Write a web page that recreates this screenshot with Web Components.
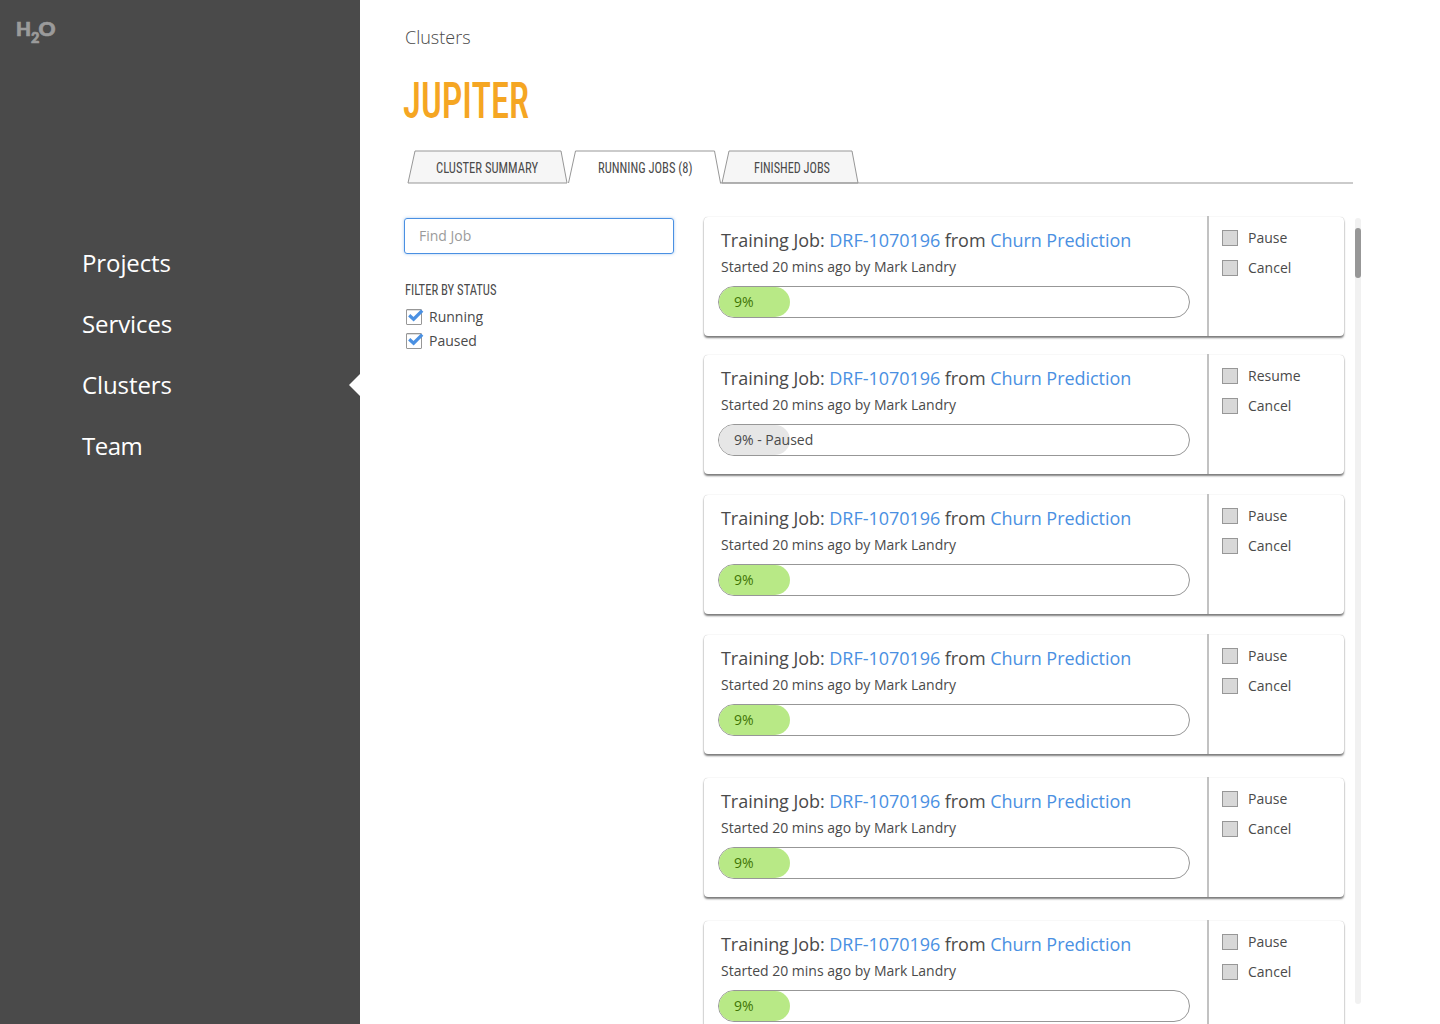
<!DOCTYPE html>
<html lang="en">
<head>
<meta charset="utf-8">
<title>H2O Clusters</title>
<style>
html,body{margin:0;height:100%;overflow:hidden;background:#fff}
body{font-family:"Open Sans",sans-serif;color:#4a4a4a}
</style>
</head>
<body>
<h2o-app></h2o-app>
<script>
function define(name, render) {
  customElements.define(name, class extends HTMLElement {
    connectedCallback() {
      if (this.shadowRoot) return;
      const t = document.createElement('template');
      t.innerHTML = render(this);
      this.attachShadow({mode: 'open'}).appendChild(t.content.cloneNode(true));
    }
  });
}

// Condensed label fitted to an exact width.
define('condensed-label', el => {
  const a = n => el.getAttribute(n), w = +a('w'), s = +a('size');
  const h = Math.round(s * 1.2);
  return `<style>:host{display:block;flex:none;width:${w}px;height:${h}px}
  svg{display:block;overflow:visible}
  text{font-family:"Liberation Sans Narrow","Roboto",sans-serif;font-stretch:75%;font-weight:${a('weight') || 400};font-size:${s}px}</style>
  <svg width="${w}" height="${h}"><text x="0" y="${s - .5}" textLength="${w}" lengthAdjust="spacingAndGlyphs" fill="currentColor">${a('text')}</text></svg>`;
});

define('h2o-logo', () => `<style>:host{display:block;width:40px;height:24px}
svg{display:block;overflow:visible}text{font-family:Lato,sans-serif;font-weight:900;fill:#9b9b9b;stroke:#9b9b9b;stroke-width:.7px}</style>
<svg width="40" height="24"><text x="0" y="15" font-size="18" textLength="15" lengthAdjust="spacingAndGlyphs">H</text>
<text x="15" y="21.5" font-size="14.5">2</text>
<text x="22.5" y="15.3" font-size="19" textLength="17" lengthAdjust="spacingAndGlyphs">O</text></svg>`);

define('nav-item', () => `<style>:host{display:flex;align-items:center;justify-content:space-between;height:61px;padding-left:82px;color:#fff;font-size:24px;letter-spacing:-.1px}
svg{display:none}:host([active]) svg{display:block}</style>
<span><slot></slot></span><svg width="11" height="22"><path d="M11 0V22L0 11Z" fill="#fff"/></svg>`);

define('side-bar', () => `<style>:host{display:flex;flex-direction:column;flex:none;width:360px;height:1024px;background:#4a4a4a;box-sizing:border-box}
h2o-logo{margin:21px 0 0 16px}nav{margin-top:187px}</style>
<h2o-logo></h2o-logo><nav><nav-item>Projects</nav-item><nav-item>Services</nav-item><nav-item active>Clusters</nav-item><nav-item style="letter-spacing:-.5px">Team</nav-item></nav>`);

define('cluster-tab', el => {
  const w = +el.getAttribute('w'), on = el.hasAttribute('active');
  const d = on ? `M.5 33L7.5 1H${w - 6.5}L${w - .5} 33` : `M1 33L8 1H${w - 6}L${w} 33`;
  return `<style>:host{display:grid;flex:none;width:${w}px;height:34px}
  svg,.label{grid-area:1/1}svg{overflow:visible}.label{padding:9px 0 0 ${el.getAttribute('inset')}px}</style>
  <svg width="${w}" height="34"><path d="${d}${on ? '' : 'Z'}" fill="${on ? '#fff' : '#f6f6f6'}" stroke="#979797"/></svg>
  <div class="label"><slot></slot></div>`;
});

define('tab-bar', () => `<style>:host{display:flex;margin-left:3px;height:34px}
.line{flex:none;width:633px;height:34px;margin-left:-139px}
.line svg{display:block}cluster-tab{margin-right:.5px}</style>
<cluster-tab w="160" inset="28.5"><condensed-label text="CLUSTER SUMMARY" w="102" size="14"></condensed-label></cluster-tab>
<cluster-tab w="153" inset="30" active><condensed-label text="RUNNING JOBS (8)" w="94.5" size="14"></condensed-label></cluster-tab>
<cluster-tab w="137" inset="32.5"><condensed-label text="FINISHED JOBS" w="76" size="14"></condensed-label></cluster-tab>
<div class="line"><svg width="633" height="34"><path d="M0 33H633" stroke="#979797"/></svg></div>`);

define('status-check', () => `<style>:host{display:flex;align-items:center;height:24px;font-size:14px;gap:6px}
svg{display:block;overflow:visible}span{margin-top:-2px}</style>
<svg width="18" height="18"><rect x="1.5" y="1.5" width="15" height="15" rx=".5" fill="#fff" stroke="#979797"/><path d="M2 2.5H16" stroke="#dedede"/><path d="M4.2 7.3L8.6 11.2L17.2 2.6" fill="none" stroke="#4a90e2" stroke-width="3.2"/></svg>
<span><slot></slot></span>`);

define('job-filter', () => `<style>:host{display:block;width:270px;flex:none;padding-top:1px}
.find{box-sizing:border-box;width:270px;height:36px;border:1px solid #4a90e2;border-radius:3px;box-shadow:0 0 3px rgba(74,144,226,.5);padding-left:14px;font-size:14px;line-height:34px;color:#9b9b9b}
condensed-label{margin:27px 0 0 1px}.list{padding:7px 0 0 1px}</style>
<div class="find">Find Job</div>
<condensed-label text="FILTER BY STATUS" w="91.5" size="14"></condensed-label>
<div class="list"><status-check>Running</status-check><status-check>Paused</status-check></div>`);

define('job-action', () => `<style>:host{display:flex;align-items:center;gap:10px;height:30px;font-size:14px}
i{box-sizing:border-box;width:16px;height:16px;border:1px solid #979797;background:#d8d8d8}span{margin-top:-2px}</style><i></i><span><slot></slot></span>`);

define('job-card', el => {
  const paused = el.hasAttribute('paused');
  return `<style>:host{display:flex;flex:none;box-sizing:border-box;width:640px;height:119px;background:#fff;border-radius:4px;box-shadow:0 0 1px rgba(0,0,0,.3),0 2px 2px rgba(0,0,0,.5)}
  .info{width:503px;box-sizing:border-box;padding:9px 0 0 14px}
  .rule{width:2px;margin-top:-1px;background:#c2c2c2}
  .title{padding-left:3px;font-size:18px;line-height:28px;letter-spacing:-.045px;white-space:nowrap}a{color:#4a90e2}
  .by{padding:1px 0 0 3px;font-size:14px;line-height:24px}
  .bar{box-sizing:border-box;width:472px;height:32px;margin-top:7px;border:1px solid #979797;border-radius:16px;overflow:hidden;font-size:14px;line-height:30px}
  .fill{width:71px;height:30px;border-radius:0 15px 15px 0;background:${paused ? '#e6e6e6' : '#b8e986'};color:${paused ? '#4a4a4a' : '#417505'};white-space:nowrap}
  .fill span{margin-left:15px}
  .actions{padding:6px 0 0 13px}</style>
  <div class="info"><div class="title">Training Job: <a>DRF-1070196</a> from <a>Churn Prediction</a></div>
  <div class="by">Started 20 mins ago by Mark Landry</div>
  <div class="bar"><div class="fill"><span>${paused ? '9% - Paused' : '9%'}</span></div></div></div>
  <div class="rule"></div>
  <div class="actions"><job-action>${paused ? 'Resume' : 'Pause'}</job-action><job-action>Cancel</job-action></div>`;
});

define('job-list', () => `<style>:host{display:flex;flex-direction:column;flex:none;width:640px}
job-card{margin-bottom:21px}job-card:nth-of-type(1){margin-bottom:19px}job-card:nth-of-type(n+4){margin-bottom:24px}</style>
<job-card></job-card><job-card paused></job-card><job-card></job-card><job-card></job-card><job-card></job-card><job-card></job-card>`);

define('scroll-track', () => `<style>:host{display:block;box-sizing:border-box;flex:none;width:6px;height:786px;margin:1px 0 0 11px;padding-top:10px;border-radius:3px;background:#f1f1f1}
i{display:block;height:50px;border-radius:3px;background:#979797}</style><i></i>`);

define('h2o-app', () => `<style>:host{display:flex;width:1440px;height:1024px;overflow:hidden}
main{flex:1;min-width:0;padding-left:44px}
.crumb{margin:24px 0 0 1px;font-size:18px;font-weight:300;line-height:27px}
.title{height:99px;padding-top:25px;box-sizing:border-box;color:#f5a623}
.title condensed-label{margin:-8px 0 0 -1px}
.content{display:flex;margin-top:33px}job-list{margin-left:30px}</style>
<side-bar></side-bar>
<main><div class="crumb">Clusters</div>
<div class="title"><condensed-label text="JUPITER" w="126" size="50" weight="550"></condensed-label></div>
<tab-bar></tab-bar>
<div class="content"><job-filter></job-filter><job-list></job-list><scroll-track></scroll-track></div></main>`);
</script>
</body>
</html>
